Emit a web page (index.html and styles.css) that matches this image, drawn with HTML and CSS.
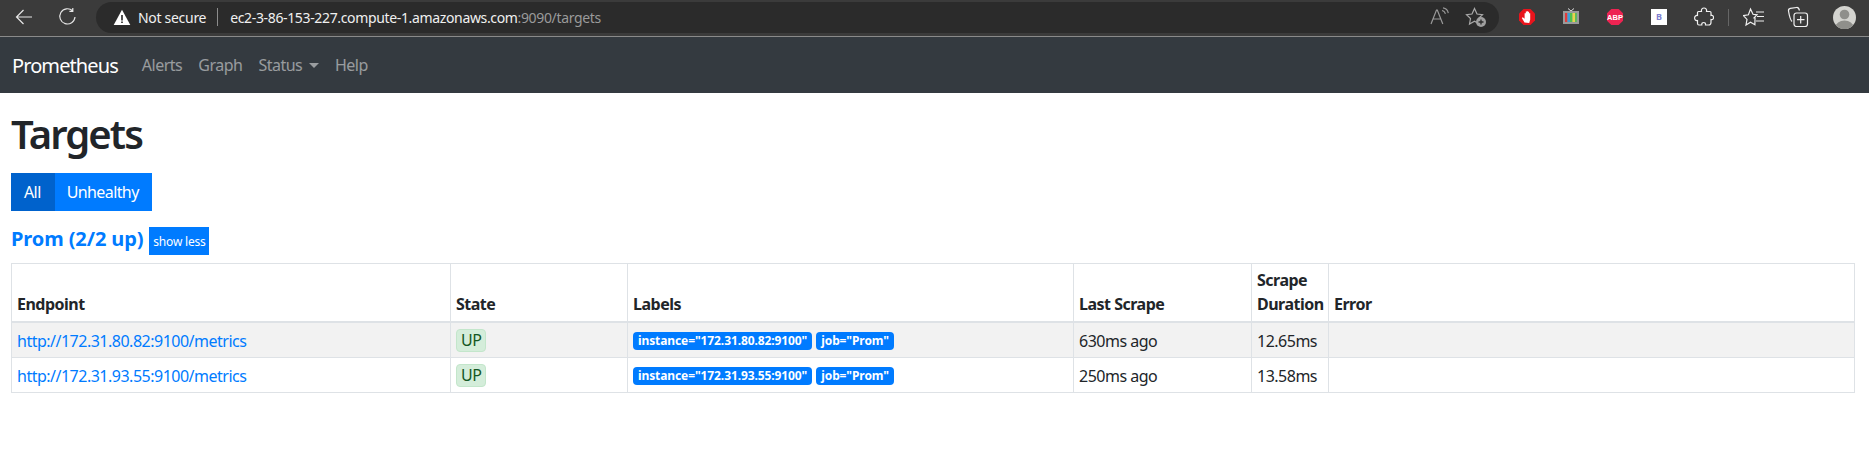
FILE: index.html
```html
<!DOCTYPE html>
<html lang="en">
<head>
<meta charset="utf-8">
<title>Prometheus Time Series Collection and Processing Server</title>
<link rel="stylesheet" href="styles.css">
</head>
<body>
<header class="chrome">
  <svg class="tool back" width="20" height="20" viewBox="0 0 20 20"><path d="M18 10H2.500M9.500 3l-7 7 7 7" fill="none" stroke="#e6e6e6" stroke-width="1.200"/></svg>
  <svg class="tool reload" width="20" height="20" viewBox="0 0 20 20"><path d="M14.600 3.800A7.600 7.600 0 1 0 17 10M14.800 1v3.400h-3.400" fill="none" stroke="#e6e6e6" stroke-width="1.200"/></svg>
  <div class="address">
    <svg class="warn" width="18" height="17" viewBox="0 0 18 17"><path d="M9 .8 17.300 16H.7z" fill="#fff"/><path d="M8.200 6h1.600v5.400H8.200zM8.200 12.400h1.600V14H8.200z" fill="#222"/></svg>
    <span class="secure">Not secure</span>
    <span class="addr-sep"></span>
    <span class="url">ec2-3-86-153-227.compute-1.amazonaws.com<span class="url-dim">:9090/targets</span></span>
    <span class="addr-space"></span>
    <svg class="read" width="24" height="20" viewBox="0 0 24 20"><path d="M3 17 8.500 3h.8L14.800 17M5 12h8" fill="none" stroke="#9a9a9a" stroke-width="1.200"/><path d="M14 3.500c2 .4 3 1.500 3.400 3.400M15 .9c3 .5 4.800 2.300 5.300 5.300" fill="none" stroke="#9a9a9a" stroke-width="1.100"/></svg>
    <svg class="fav" width="22" height="22" viewBox="0 0 22 22"><path d="M9.500 2.500 12 8l5.500.6-4 3.900 1 5.500-5-2.800L4.500 18l1-5.500-4-3.900L7 8z" fill="none" stroke="#a8a8a8" stroke-width="1.200"/><circle cx="16" cy="16" r="5" fill="#a0a0a0"/><path d="M13.500 16h5M16 13.500v5" stroke="#2b2b2b" stroke-width="1.300"/></svg>
  </div>
  <svg class="ext e1" width="18" height="18" viewBox="0 0 18 18"><path d="M5.500 1h7L17 5.500v7L12.500 17h-7L1 12.500v-7z" fill="#e8141c"/><path d="M6.500 14.500 3.800 10l1-.8 1.800 1.600V5.200h1.200V3.500h1.100v-.3h1.100v.5h1.100v1.500h1.100v6.300l-1 3.500z" fill="#fff"/></svg>
  <svg class="ext e2" width="18" height="18" viewBox="0 0 18 18"><path d="M6 .5 9 3l3-2.500" fill="none" stroke="#ddd"/><rect x="1" y="3" width="16" height="13" fill="#9a9a9a"/><rect x="3" y="5" width="2.500" height="9" fill="#e23b3b"/><rect x="5.500" y="5" width="2.500" height="9" fill="#39a0d8"/><rect x="8" y="5" width="2.500" height="9" fill="#4fc04f"/><rect x="10.500" y="5" width="2.500" height="9" fill="#e8d44a"/><rect x="13" y="5" width="2" height="9" fill="#5cb85c"/></svg>
  <svg class="ext e3" width="18" height="18" viewBox="0 0 18 18"><path d="M5.300 1h7.400L17 5.300v7.400L12.700 17H5.300L1 12.700V5.300z" fill="#ee2452"/></svg>
  <span class="abp">ABP</span>
  <span class="ext-b">B</span>
  <svg class="tool puzzle" width="20" height="20" viewBox="0 0 20 20"><path d="M7.500 4.500C7 2 8.500 1 10 1s3 1 2.500 3.500H16c.5 0 1 .5 1 1v3c2-.5 2.500 1 2.500 2s-.5 2.500-2.500 2v3c0 2-1 2.500-2.500 2.500h-3c.3-2-.8-2.500-1.800-2.500S7.500 16 7.800 18H5c-.8 0-1.500-.7-1.500-1.500v-3C1.500 14 .6 12.500.6 11S2 8 3.500 8.500V5.500c0-.5.5-1 1-1z" fill="none" stroke="#f0f0f0" stroke-width="1.200"/></svg>
  <span class="tool-sep"></span>
  <svg class="tool favs" width="22" height="20" viewBox="0 0 22 20"><path d="M7.500 2 10 7.300l4 .5-3 3 1 .2-.1 6.700-4.400-2.400L3 18l1-5.600-3.600-3.800 5-.8z" fill="none" stroke="#f0f0f0" stroke-width="1.200"/><path d="M13 5h8M14 9.500h7M13 14h8" stroke="#f0f0f0" stroke-width="1.200"/></svg>
  <svg class="tool coll" width="22" height="22" viewBox="0 0 22 22"><rect x="7" y="7" width="13.500" height="13.500" rx="2.500" fill="none" stroke="#f0f0f0" stroke-width="1.200"/><path d="M13.700 10v7.500M10 13.700h7.500" stroke="#f0f0f0" stroke-width="1.200"/><path d="M5 15.500C3.500 14 2 8 1.500 5c-.2-1.500.5-2.300 1.800-2.600L9.500 1.500c1.300-.2 2.400.8 3 3" fill="none" stroke="#f0f0f0" stroke-width="1.200"/></svg>
  <svg class="avatar" width="23" height="23" viewBox="0 0 23 23"><defs><clipPath id="av"><circle cx="11.500" cy="11.500" r="11.500"/></clipPath></defs><g clip-path="url(#av)"><rect width="23" height="23" fill="#d3d3cf"/><circle cx="11.500" cy="8.500" r="4.800" fill="#8f8f8b"/><ellipse cx="11.500" cy="21" rx="9" ry="6.500" fill="#8f8f8b"/></g></svg>
</header>

<nav class="navbar">
  <a class="brand" href="#">Prometheus</a>
  <a class="nav-link" href="#">Alerts</a>
  <a class="nav-link" href="#">Graph</a>
  <a class="nav-link" href="#">Status <i class="caret"></i></a>
  <a class="nav-link" href="#">Help</a>
</nav>

<main class="container">
  <h1 class="title">Targets</h1>
  <div class="btn-group">
    <button class="btn active">All</button><button class="btn">Unhealthy</button>
  </div>
  <div class="pool-head">
    <a class="pool-name" href="#">Prom (2/2 up)</a>
    <button class="btn-xs">show less</button>
  </div>
  <table class="targets">
    <colgroup>
      <col class="c-end"><col class="c-state"><col class="c-labels"><col class="c-last"><col class="c-dur"><col>
    </colgroup>
    <thead>
      <tr><th>Endpoint</th><th>State</th><th>Labels</th><th>Last Scrape</th><th>Scrape Duration</th><th>Error</th></tr>
    </thead>
    <tbody>
      <tr class="odd">
        <td><a href="#">http://172.31.80.82:9100/metrics</a></td>
        <td><span class="up">UP</span></td>
        <td><span class="label">instance="172.31.80.82:9100"</span><span class="label">job="Prom"</span></td>
        <td><span class="cell-text">630ms ago</span></td><td><span class="cell-text">12.65ms</span></td><td></td>
      </tr>
      <tr>
        <td><a href="#">http://172.31.93.55:9100/metrics</a></td>
        <td><span class="up">UP</span></td>
        <td><span class="label">instance="172.31.93.55:9100"</span><span class="label">job="Prom"</span></td>
        <td><span class="cell-text">250ms ago</span></td><td><span class="cell-text">13.58ms</span></td><td></td>
      </tr>
    </tbody>
  </table>
</main>
</body>
</html>
```

FILE: styles.css
```css
* { box-sizing: border-box; }
html, body { margin: 0; padding: 0; background: #fff; }
body { font-family: "Noto Sans", "Open Sans", sans-serif; color: #212529; font-size: 16px; overflow: hidden; }
a { text-decoration: none; }

.chrome {
  height: 37px;
  background: #3b3b3b;
  border-bottom: 1px solid #8a8a8a;
  display: flex;
  align-items: center;
  padding-bottom: 2px;
}
.chrome svg { flex: none; display: block; }
.back { margin-left: 14px; }
.reload { margin-left: 24px; }
.address {
  margin-left: 18px;
  width: 1403px;
  height: 31px;
  background: #2b2b2b;
  border-radius: 16px;
  display: flex;
  align-items: center;
  padding-left: 17px;
  color: #f0f0f0;
  font-size: 14px;
  letter-spacing: -0.3px;
}
.secure { margin-left: 7px; }
.addr-sep { width: 1px; height: 18px; background: #8c8c8c; margin: 0 12px 0 11px; }
.url { letter-spacing: -0.35px; }
.url-dim { color: #9a9a9a; }
.addr-space { flex: 1; }
.fav { margin-left: 13px; margin-right: 12px; }

.ext { flex: none; }
.e1 { margin-left: 19px; }
.e2 { margin-left: 26px; }
.e3 { margin-left: 26px; }
.abp {
  margin-left: -18px;
  width: 18px;
  font-size: 7.500px;
  font-weight: 700;
  color: #fff;
  text-align: center;
  font-family: "Liberation Sans", sans-serif;
}
.ext-b {
  margin-left: 27px;
  width: 16px;
  height: 16px;
  background: #fff;
  color: #7f7fd0;
  font-size: 9px;
  font-weight: 700;
  line-height: 16px;
  text-align: center;
}
.puzzle { margin-left: 27px; }
.tool-sep { width: 1px; height: 17px; background: #666; margin-left: 14px; }
.favs { margin-left: 14px; }
.coll { margin-left: 22px; }
.avatar { margin-left: 24px; }

.navbar {
  height: 56px;
  background: #343a40;
  display: flex;
  align-items: center;
  padding: 0 0 0 12px;
}
.brand { color: #fff; font-size: 20px; margin-right: 16px; letter-spacing: -0.9px; }
.nav-link { color: rgba(255,255,255,.5); padding: 0 8px; font-size: 16px; letter-spacing: -0.5px; }
.caret {
  display: inline-block;
  width: 0; height: 0;
  margin-left: 3px;
  vertical-align: 3px;
  border-top: 5px solid rgba(255,255,255,.5);
  border-left: 5px solid transparent;
  border-right: 5px solid transparent;
}

.container { padding: 0 14px 0 11px; }
.title {
  margin: 17px 0 15px;
  font-size: 40px;
  font-weight: 600;
  line-height: 48px;
  letter-spacing: -1.900px;
}
.btn-group { display: flex; }
.btn {
  height: 38px;
  background: #007bff;
  color: #fff;
  border: 0;
  padding: 0 13px 0 12px;
  font: inherit;
  letter-spacing: -0.6px;
}
.btn.active { background: #0062cc; padding: 0 14px 0 13px; }
.pool-head { display: flex; align-items: center; margin-top: 16px; height: 28px; }
.pool-name { color: #007bff; font-size: 20px; font-weight: 700; margin-right: 6px; margin-bottom: 6px; letter-spacing: -0.1px; }
.btn-xs {
  height: 28px;
  width: 60px;
  padding: 0;
  border: 0;
  background: #007bff;
  color: #fff;
  font: inherit;
  font-size: 12px;
  letter-spacing: -0.2px;
}

.targets {
  margin-top: 8px;
  width: 1844px;
  table-layout: fixed;
  border-collapse: collapse;
  font-size: 16px;
  letter-spacing: -0.5px;
}
.c-end { width: 439px; }
.c-state { width: 177px; }
.c-labels { width: 446px; }
.c-last { width: 178px; }
.c-dur { width: 77px; }
.targets th, .targets td { border: 1px solid #dee2e6; padding: 4px 5px; vertical-align: top; text-align: left; }
.targets th { vertical-align: bottom; border-bottom-width: 2px; line-height: 24px; font-weight: 700; padding-bottom: 5px; }
.targets td { height: 34px; line-height: 24px; padding-top: 5px; }
.targets td a { color: #007bff; display: inline-block; padding-top: 1px; }
.cell-text { display: inline-block; padding-top: 1px; }
.odd { background: rgba(0,0,0,.05); }
.up {
  display: inline-block;
  background: #d4edda;
  border: 1px solid #c3e6cb;
  border-radius: 4px;
  color: #155724;
  padding: 0 4px;
  height: 23px;
  line-height: 21px;
}
.label {
  display: inline-block;
  background: #007bff;
  color: #fff;
  border-radius: 4px;
  font-size: 12px;
  font-weight: 700;
  line-height: 12px;
  padding: 3px 5px;
  margin-right: 4px;
  letter-spacing: -0.1px;
  vertical-align: 1px;
}
```
